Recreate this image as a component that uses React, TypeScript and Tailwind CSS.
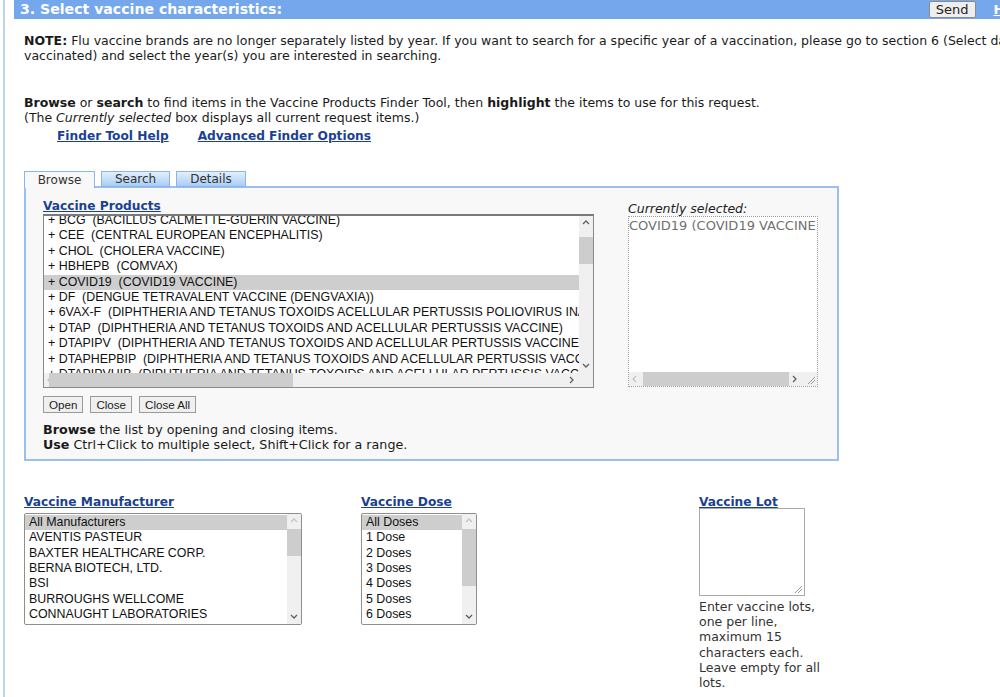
const products = [
  "+ BCG  (BACILLUS CALMETTE-GUERIN VACCINE)",
  "+ CEE  (CENTRAL EUROPEAN ENCEPHALITIS)",
  "+ CHOL  (CHOLERA VACCINE)",
  "+ HBHEPB  (COMVAX)",
  "+ COVID19  (COVID19 VACCINE)",
  "+ DF  (DENGUE TETRAVALENT VACCINE (DENGVAXIA))",
  "+ 6VAX-F  (DIPHTHERIA AND TETANUS TOXOIDS ACELLULAR PERTUSSIS POLIOVIRUS INACTIVATED HEPATITIS B)",
  "+ DTAP  (DIPHTHERIA AND TETANUS TOXOIDS AND ACELLULAR PERTUSSIS VACCINE)",
  "+ DTAPIPV  (DIPHTHERIA AND TETANUS TOXOIDS AND ACELLULAR PERTUSSIS VACCINE AND POLIOVIRUS)",
  "+ DTAPHEPBIP  (DIPHTHERIA AND TETANUS TOXOIDS AND ACELLULAR PERTUSSIS VACCINE HEPATITIS B)",
  "+ DTAPIPVHIB  (DIPHTHERIA AND TETANUS TOXOIDS AND ACELLULAR PERTUSSIS VACCINE POLIOVIRUS)",
];

const manufacturers = [
  "All Manufacturers",
  "AVENTIS PASTEUR",
  "BAXTER HEALTHCARE CORP.",
  "BERNA BIOTECH, LTD.",
  "BSI",
  "BURROUGHS WELLCOME",
  "CONNAUGHT LABORATORIES",
];

const doses = ["All Doses", "1 Dose", "2 Doses", "3 Doses", "4 Doses", "5 Doses", "6 Doses"];

function Chevron({ dir, faint }: { dir: "up" | "down" | "left" | "right"; faint?: boolean }) {
  const pts = {
    up: "1,5 4,2 7,5",
    down: "1,2 4,5 7,2",
    left: "5,1 2,4 5,7",
    right: "2,1 5,4 2,7",
  }[dir];
  return (
    <svg width="8" height="8" viewBox="0 0 8 8" className="block">
      <polyline points={pts} fill="none" stroke={faint ? "#c4c4c4" : "#5f5f5f"} strokeWidth="1.3" />
    </svg>
  );
}

function VScroll({ thumbTop, thumbHeight, upFaint }: { thumbTop: number; thumbHeight: number; upFaint?: boolean }) {
  return (
    <div className="relative w-[14px] h-full bg-[#f0f0f0] shrink-0">
      <div className="absolute top-[3px] left-[3px]">
        <Chevron dir="up" faint={upFaint} />
      </div>
      <div
        className="absolute left-0 w-[14px] bg-[#cdcdcd]"
        style={{ top: thumbTop, height: thumbHeight }}
      />
      <div className="absolute bottom-[3px] left-[3px]">
        <Chevron dir="down" />
      </div>
    </div>
  );
}

function SmallList({
  items,
  width,
  thumbTop,
  thumbHeight,
}: {
  items: string[];
  width: string;
  thumbTop: number;
  thumbHeight: number;
}) {
  return (
    <div className={`${width} h-[112px] mt-[3px] border border-[#8f8f8f] rounded-[2px] bg-white flex overflow-hidden`}>
      <div className="flex-1 pt-[1px] font-['Liberation_Sans',Arial,sans-serif] text-[12.4px] leading-[15.33px] text-[#111]">
        {items.map((it, i) => (
          <div key={it} className={`pl-[4px] whitespace-nowrap ${i === 0 ? "bg-[#cecece]" : ""}`}>
            {it}
          </div>
        ))}
      </div>
      <VScroll thumbTop={thumbTop} thumbHeight={thumbHeight} upFaint />
    </div>
  );
}

function Heading({ children }: { children: React.ReactNode }) {
  return <div className="font-bold text-[#1b3f93] underline leading-[15px] text-[12.2px]">{children}</div>;
}

export default function App() {
  return (
    <div className="w-[1000px] h-[697px] overflow-hidden bg-white pl-[3px] font-['DejaVu_Sans',Verdana,sans-serif] text-[12.5px] text-[#1a1a1a]">
      <div className="w-[1040px] h-full border-l-2 border-[#bcd3f2] pl-[9px]">
        {/* header bar */}
        <div className="w-[1019px] h-[19px] bg-[#74a7ec] flex items-center justify-between pl-[6px] pr-[6px]">
          <div className="text-white font-bold text-[14.1px] leading-[19px]">3. Select vaccine characteristics:</div>
          <div className="flex items-center gap-[18px]">
            <button className="w-[47px] h-[17px] bg-[#eeeeee] border border-[#8a8a8a] rounded-[2px] text-[13px] leading-[15px] text-[#222] font-['DejaVu_Sans',Verdana,sans-serif]">
              Send
            </button>
            <span className="text-white underline font-bold text-[13px]">Help</span>
          </div>
        </div>

        <div className="pl-[10px]">
          <p className="mt-[14px] leading-[15px] whitespace-nowrap">
            <b>NOTE:</b> Flu vaccine brands are no longer separately listed by year. If you want to search for a specific year of a vaccination, please go to section 6 (Select date
            <br />
            vaccinated) and select the year(s) you are interested in searching.
          </p>

          <p className="mt-[32px] leading-[15px]">
            <b>Browse</b> or <b>search</b> to find items in the Vaccine Products Finder Tool, then <b>highlight</b> the items to use for this request.
            <br />
            (The <i>Currently selected</i> box displays all current request items.)
          </p>

          <div className="mt-[4px] pl-[33px] flex gap-[29px] font-bold text-[12.2px] leading-[15px] text-[#1b3f93] underline">
            <span>Finder Tool Help</span>
            <span>Advanced Finder Options</span>
          </div>

          {/* tabs */}
          <div className="mt-[26px] flex items-end gap-[6px] h-[17px] text-[12px]">
            <div className="w-[71px] h-[17px] bg-[#f8f8f8] border border-b-0 border-[#8cb4e8] flex items-center justify-center text-[#333] relative z-10 translate-y-[1px]">
              Browse
            </div>
            <div className="w-[69px] h-[16px] bg-gradient-to-b from-[#e3effd] to-[#a9cdf5] border border-[#8cb4e8] flex items-center justify-center text-[#333]">
              Search
            </div>
            <div className="w-[70px] h-[16px] bg-gradient-to-b from-[#e3effd] to-[#a9cdf5] border border-[#8cb4e8] flex items-center justify-center text-[#333]">
              Details
            </div>
          </div>

          {/* panel */}
          <div className="w-[815px] h-[275px] border-2 border-[#9cc0ee] bg-[#f8f8f8] flex pl-[17px] -mt-[1px]">
            <div className="pt-[11px] w-[551px]">
              <Heading>Vaccine Products</Heading>
              <div className="h-[174px] w-[551px] border border-[#8a8a8a] border-t-2 border-t-[#7a7a7a] bg-white flex flex-col">
                <div className="flex flex-1 min-h-0">
                  <div className="flex-1 overflow-hidden">
                    <div className="-mt-[3px] font-['Liberation_Sans',Arial,sans-serif] text-[12.4px] leading-[15.4px] text-[#111]">
                      {products.map((p) => (
                        <div
                          key={p}
                          className={`pl-[4px] whitespace-pre ${p.includes("COVID19") ? "bg-[#cecece]" : ""}`}
                        >
                          {p}
                        </div>
                      ))}
                    </div>
                  </div>
                  <VScroll thumbTop={21} thumbHeight={27} />
                </div>
                <div className="h-[14px] bg-[#f0f0f0] relative shrink-0">
                  <div className="absolute left-[2px] top-[3px]">
                    <Chevron dir="left" faint />
                  </div>
                  <div className="absolute left-[5px] top-0 h-[14px] w-[244px] bg-[#cdcdcd]" />
                  <div className="absolute right-[17px] top-[3px]">
                    <Chevron dir="right" />
                  </div>
                </div>
              </div>

              <div className="mt-[8px] flex gap-[7px] font-['Liberation_Sans',Arial,sans-serif] text-[11.6px] text-[#222]">
                <button className="h-[17px] px-[5px] bg-[#efefef] border border-[#9a9a9a] leading-[15px]">Open</button>
                <button className="h-[17px] px-[5px] bg-[#efefef] border border-[#9a9a9a] leading-[15px]">Close</button>
                <button className="h-[17px] px-[5px] bg-[#efefef] border border-[#9a9a9a] leading-[15px]">Close All</button>
              </div>

              <p className="mt-[9px] leading-[15px] text-[12.7px]">
                <b>Browse</b> the list by opening and closing items.
                <br />
                <b>Use</b> Ctrl+Click to multiple select, Shift+Click for a range.
              </p>
            </div>

            <div className="ml-[34px] pt-[13px]">
              <div className="italic leading-[15px] text-[#222]">Currently selected:</div>
              <div className="w-[190px] h-[171px] border border-dotted border-[#9a9a9a] bg-white flex flex-col">
                <div className="flex-1 overflow-hidden whitespace-nowrap text-[#707070] text-[13px] leading-[15px] pt-[1px]">
                  COVID19 (COVID19 VACCINE)
                </div>
                <div className="h-[14px] bg-[#f0f0f0] relative shrink-0">
                  <div className="absolute left-[2px] top-[3px]">
                    <Chevron dir="left" faint />
                  </div>
                  <div className="absolute left-[14px] top-0 h-[14px] w-[146px] bg-[#cdcdcd]" />
                  <div className="absolute right-[18px] top-[3px]">
                    <Chevron dir="right" />
                  </div>
                  <svg width="10" height="10" viewBox="0 0 10 10" className="absolute right-[1px] bottom-[1px]">
                    <line x1="2" y1="9" x2="9" y2="2" stroke="#9a9a9a" strokeWidth="1" />
                    <line x1="5" y1="9" x2="9" y2="5" stroke="#9a9a9a" strokeWidth="1" />
                  </svg>
                </div>
              </div>
            </div>
          </div>

          {/* bottom selectors */}
          <div className="mt-[34px] flex">
            <div className="w-[337px]">
              <Heading>Vaccine Manufacturer</Heading>
              <SmallList items={manufacturers} width="w-[278px]" thumbTop={15} thumbHeight={27} />
            </div>
            <div className="w-[338px]">
              <Heading>Vaccine Dose</Heading>
              <SmallList items={doses} width="w-[116px]" thumbTop={15} thumbHeight={57} />
            </div>
            <div className="w-[130px]">
              <Heading>Vaccine Lot</Heading>
              <div className="relative w-[106px] h-[88px] -mt-[2px] border border-[#a9a9a9] bg-white">
                <svg width="10" height="10" viewBox="0 0 10 10" className="absolute right-[1px] bottom-[1px]">
                  <line x1="2" y1="9" x2="9" y2="2" stroke="#9a9a9a" strokeWidth="1" />
                  <line x1="5" y1="9" x2="9" y2="5" stroke="#9a9a9a" strokeWidth="1" />
                </svg>
              </div>
              <p className="mt-[3px] w-[126px] leading-[15.2px] text-[#333] text-[12.5px]">
                Enter vaccine lots, one per line, maximum 15 characters each. Leave empty for all lots.
              </p>
            </div>
          </div>
        </div>
      </div>
    </div>
  );
}
